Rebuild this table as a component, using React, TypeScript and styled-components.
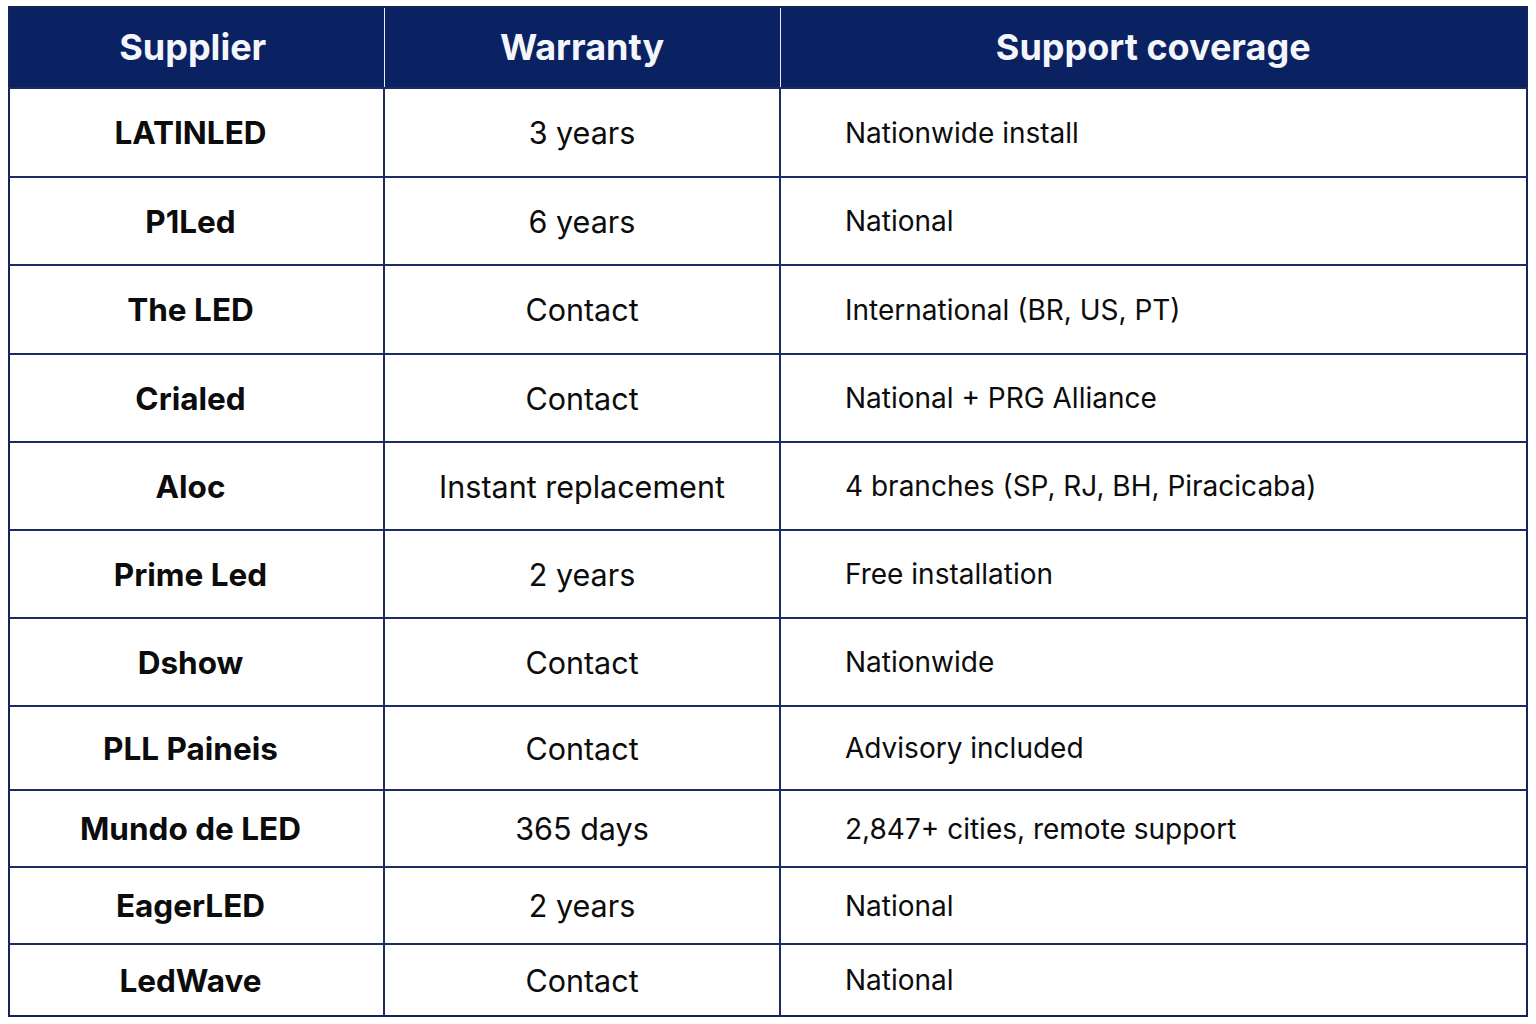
import React from "react";
import styled, { createGlobalStyle } from "styled-components";

const Global = createGlobalStyle`
  html, body { margin: 0; padding: 0; background: #ffffff; }
  body { font-family: Inter, "Noto Sans", "Liberation Sans", sans-serif; }
`;

const Page = styled.div`
  padding: 6px 10px 0 8px;
`;

const Table = styled.table`
  width: 1518px;
  border-collapse: collapse;
  table-layout: fixed;
  border: 2px solid #14245a;
`;

const Col = styled.col<{ $w: number }>`
  width: ${(p) => p.$w}px;
`;

const HeadRow = styled.tr`
  height: 81px;
  background: #0b2262;
`;

const HeadCell = styled.th<{ $shift?: number }>`
  color: #f4f6fc;
  font-size: 36px;
  font-weight: 700;
  text-align: center;
  padding: 0 ${(p) => p.$shift ?? 0}px 2px 0;
  border-left: 1px solid #e6ebf6;
  &:first-child { border-left: none; }
`;

const Row = styled.tr<{ $h: number }>`
  height: ${(p) => p.$h}px;
  border-top: 2px solid #1b2b63;
`;

const Cell = styled.td<{ $kind: "name" | "warranty" | "support" }>`
  color: #0c0c0c;
  border-left: 2px solid #1b2b63;
  font-size: ${(p) => (p.$kind === "support" ? 28 : p.$kind === "name" ? 31.5 : 30.5)}px;
  font-weight: ${(p) => (p.$kind === "name" ? 700 : 400)};
  text-align: ${(p) => (p.$kind === "support" ? "left" : "center")};
  padding: ${(p) =>
    p.$kind === "support" ? "0 0 0 64px" : p.$kind === "name" ? "0 12px 0 0" : "0"};
  vertical-align: middle;
  &:first-child { border-left: none; }
`;

const rows: { name: string; warranty: string; support: string; h: number }[] = [
  { name: "LATINLED", warranty: "3 years", support: "Nationwide install", h: 89 },
  { name: "P1Led", warranty: "6 years", support: "National", h: 88 },
  { name: "The LED", warranty: "Contact", support: "International (BR, US, PT)", h: 89 },
  { name: "Crialed", warranty: "Contact", support: "National + PRG Alliance", h: 88 },
  { name: "Aloc", warranty: "Instant replacement", support: "4 branches (SP, RJ, BH, Piracicaba)", h: 88 },
  { name: "Prime Led", warranty: "2 years", support: "Free installation", h: 88 },
  { name: "Dshow", warranty: "Contact", support: "Nationwide", h: 88 },
  { name: "PLL Paineis", warranty: "Contact", support: "Advisory included", h: 84 },
  { name: "Mundo de LED", warranty: "365 days", support: "2,847+ cities, remote support", h: 77 },
  { name: "EagerLED", warranty: "2 years", support: "National", h: 77 },
  { name: "LedWave", warranty: "Contact", support: "National", h: 72 },
];

export default function App() {
  return (
    <Page>
      <Global />
      <Table>
        <colgroup>
          <Col $w={375} />
          <Col $w={396} />
          <Col $w={747} />
        </colgroup>
        <thead>
          <HeadRow>
            <HeadCell $shift={8}>Supplier</HeadCell>
            <HeadCell>Warranty</HeadCell>
            <HeadCell>Support coverage</HeadCell>
          </HeadRow>
        </thead>
        <tbody>
          {rows.map((r) => (
            <Row key={r.name} $h={r.h}>
              <Cell $kind="name">{r.name}</Cell>
              <Cell $kind="warranty">{r.warranty}</Cell>
              <Cell $kind="support">{r.support}</Cell>
            </Row>
          ))}
        </tbody>
      </Table>
    </Page>
  );
}
